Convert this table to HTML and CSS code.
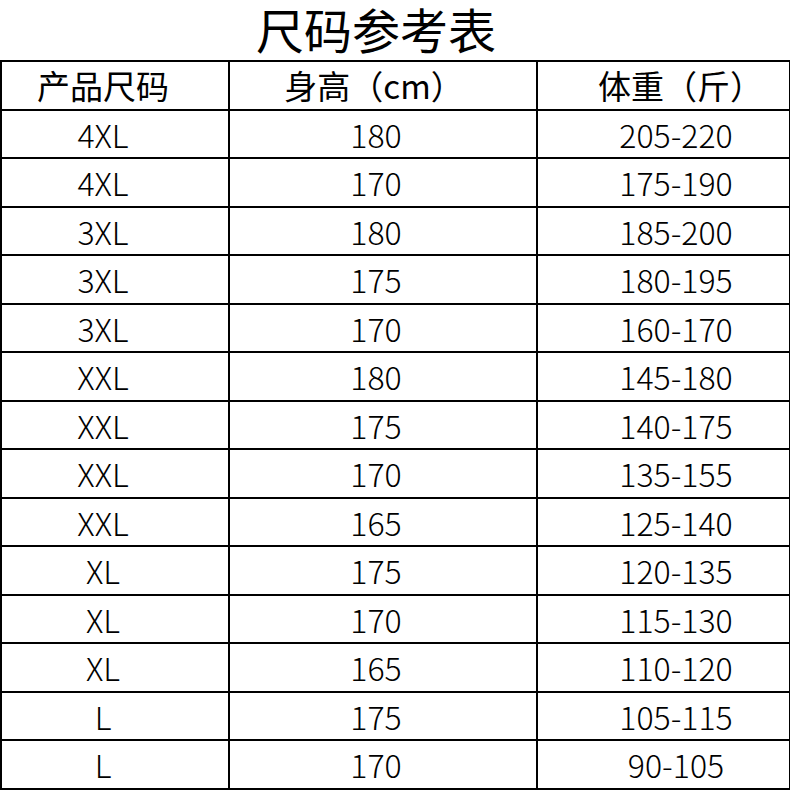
FILE: index.html
```html
<!DOCTYPE html>
<html lang="zh">
<head>
<meta charset="utf-8">
<title>尺码参考表</title>
<link rel="stylesheet" href="styles.css">
</head>
<body>
<h1 class="title">尺码参考表</h1>
<table class="size-table">
  <colgroup>
    <col class="c1"><col class="c2"><col class="c3">
  </colgroup>
  <thead>
    <tr><th class="a">产品尺码</th><th class="b">身高（cm）</th><th class="c">体重（斤）</th></tr>
  </thead>
  <tbody>
    <tr><td class="a">4XL</td><td class="b">180</td><td class="c">205-220</td></tr>
    <tr><td class="a">4XL</td><td class="b">170</td><td class="c">175-190</td></tr>
    <tr><td class="a">3XL</td><td class="b">180</td><td class="c">185-200</td></tr>
    <tr><td class="a">3XL</td><td class="b">175</td><td class="c">180-195</td></tr>
    <tr><td class="a">3XL</td><td class="b">170</td><td class="c">160-170</td></tr>
    <tr><td class="a">XXL</td><td class="b">180</td><td class="c">145-180</td></tr>
    <tr><td class="a">XXL</td><td class="b">175</td><td class="c">140-175</td></tr>
    <tr><td class="a">XXL</td><td class="b">170</td><td class="c">135-155</td></tr>
    <tr><td class="a">XXL</td><td class="b">165</td><td class="c">125-140</td></tr>
    <tr><td class="a">XL</td><td class="b">175</td><td class="c">120-135</td></tr>
    <tr><td class="a">XL</td><td class="b">170</td><td class="c">115-130</td></tr>
    <tr><td class="a">XL</td><td class="b">165</td><td class="c">110-120</td></tr>
    <tr><td class="a">L</td><td class="b">175</td><td class="c">105-115</td></tr>
    <tr><td class="a">L</td><td class="b">170</td><td class="c">90-105</td></tr>
  </tbody>
</table>
</body>
</html>
```
FILE: styles.css
```css
html, body {
  margin: 0;
  padding: 0;
  background: #fff;
}
body {
  width: 790px;
  font-family: "Noto Sans CJK SC", "Noto Sans", sans-serif;
  color: #000;
}
.title {
  margin: 0;
  padding: 0 38px 4px 0;
  line-height: 56px;
  font-size: 48px;
  font-weight: 400;
  text-align: center;
}
.size-table {
  border-collapse: collapse;
  width: 789px;
  table-layout: fixed;
}
.c1 { width: 228px; }
.c2 { width: 308px; }
.c3 { width: 253px; }
.size-table th,
.size-table td {
  border: 2px solid #000;
  height: 46.5px;
  padding: 0;
  text-align: center;
  vertical-align: middle;
  line-height: 1;
}
.size-table th {
  font-size: 33px;
  font-weight: 400;
}
.size-table td {
  font-family: "Noto Sans CJK SC Light", "Noto Sans CJK SC", sans-serif;
  font-size: 32px;
  font-weight: 300;
}
.size-table .a { padding-right: 24px; }
.size-table .b { padding-right: 14px; }
.size-table .c { padding-left: 25px; }
.size-table th.b { padding-right: 18px; }
.size-table th.c { padding-left: 34px; }
```
